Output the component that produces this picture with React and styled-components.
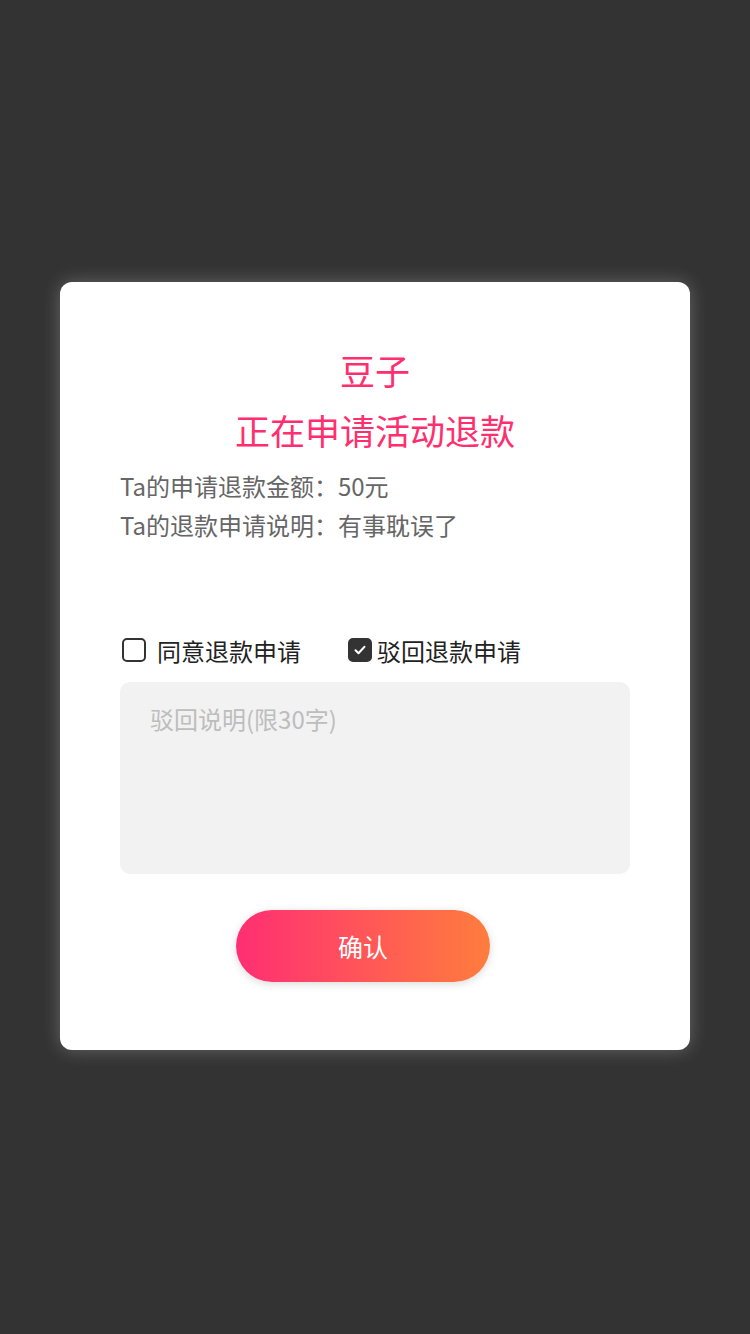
import React, { useState } from 'react';
import styled, { createGlobalStyle } from 'styled-components';

const GlobalStyle = createGlobalStyle`
  html, body {
    margin: 0;
    padding: 0;
    background: #333333;
  }
  body {
    font-family: "Noto Sans CJK SC", "Noto Sans", sans-serif;
  }
`;

const Page = styled.div`
  width: 750px;
  height: 1334px;
  display: flex;
  justify-content: center;
  padding-top: 282px;
  box-sizing: border-box;
`;

const Card = styled.div`
  width: 630px;
  height: 768px;
  box-sizing: border-box;
  background: #fff;
  border-radius: 12px;
  box-shadow: 0 0 18px rgba(255, 255, 255, 0.25);
  padding: 58px 60px 0;
  display: flex;
  flex-direction: column;
`;

const Title = styled.div`
  text-align: center;
  color: #ff2f6f;
  font-size: 35px;
  line-height: 60px;
`;

const Info = styled.div`
  margin-top: 6px;
  color: #666;
  font-size: 24px;
  line-height: 39px;
`;

const Options = styled.div`
  margin-top: 86px;
  height: 40px;
  display: flex;
  align-items: center;
  gap: 47px;
  padding-left: 2px;
`;

const Option = styled.label`
  display: flex;
  align-items: center;
  gap: ${(p) => (p.$checked ? '5px' : '11px')};
  font-size: 24px;
  color: #222;
  cursor: pointer;
`;

const Box = styled.span`
  width: 24px;
  height: 24px;
  box-sizing: border-box;
  border-radius: 5px;
  border: 2px solid #333;
  background: ${(p) => (p.$checked ? '#333' : '#fff')};
  display: flex;
  align-items: center;
  justify-content: center;
`;

const Reason = styled.textarea`
  margin-top: 12px;
  width: 510px;
  height: 192px;
  box-sizing: border-box;
  border: none;
  outline: none;
  resize: none;
  background: #f2f2f2;
  border-radius: 10px;
  padding: 19px 30px;
  font-family: inherit;
  font-size: 24px;
  line-height: 36px;
  color: #333;
  &::placeholder {
    color: #bdbdbd;
  }
`;

const Confirm = styled.button`
  margin: 36px auto 0;
  transform: translateX(-12px);
  width: 254px;
  height: 72px;
  border: none;
  border-radius: 36px;
  background: linear-gradient(90deg, #ff2e73 0%, #ff7d3d 100%);
  box-shadow: 0 2px 8px rgba(0, 0, 0, 0.15);
  color: #fff;
  font-family: inherit;
  font-size: 25px;
`;

const Check = () => (
  <svg width="16" height="16" viewBox="0 0 16 16">
    <path d="M3.5 8.2l3 3 6-6.4" fill="none" stroke="#fff" strokeWidth="2" strokeLinecap="round" strokeLinejoin="round" />
  </svg>
);

export default function App() {
  const [choice, setChoice] = useState('reject');

  return (
    <>
      <GlobalStyle />
      <Page>
        <Card>
          <Title>豆子</Title>
          <Title>正在申请活动退款</Title>
          <Info>
            <div>Ta的申请退款金额：50元</div>
            <div>Ta的退款申请说明：有事耽误了</div>
          </Info>
          <Options>
            <Option $checked={choice === 'agree'} onClick={() => setChoice('agree')}>
              <Box $checked={choice === 'agree'}>{choice === 'agree' && <Check />}</Box>
              同意退款申请
            </Option>
            <Option $checked={choice === 'reject'} onClick={() => setChoice('reject')}>
              <Box $checked={choice === 'reject'}>{choice === 'reject' && <Check />}</Box>
              驳回退款申请
            </Option>
          </Options>
          <Reason placeholder="驳回说明(限30字)" />
          <Confirm>确认</Confirm>
        </Card>
      </Page>
    </>
  );
}
